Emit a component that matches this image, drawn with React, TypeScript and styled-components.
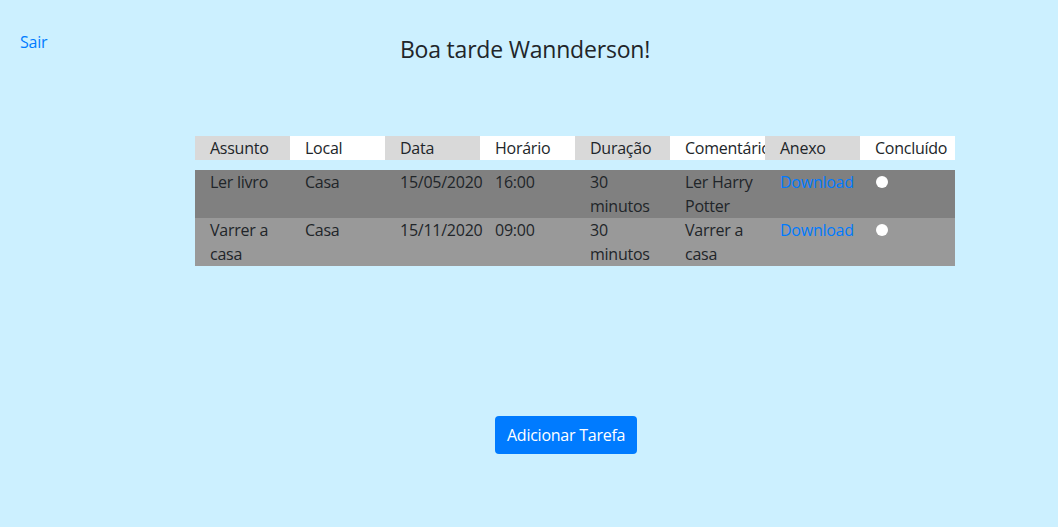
import styled, { createGlobalStyle } from "styled-components"

const GlobalStyle = createGlobalStyle`
  html, body {
    margin: 0;
    padding: 0;
    background: #ccf0ff;
    font-family: "Open Sans", "Noto Sans", sans-serif;
    color: #212529;
    letter-spacing: -0.25px;
  }
`

const tasks = [
  { assunto: "Ler livro", local: "Casa", data: "15/05/2020", horario: "16:00", duracao: "30 minutos", comentario: "Ler Harry Potter" },
  { assunto: "Varrer a casa", local: "Casa", data: "15/11/2020", horario: "09:00", duracao: "30 minutos", comentario: "Varrer a casa" },
]

const headers = ["Assunto", "Local", "Data", "Horário", "Duração", "Comentário", "Anexo", "Concluído"]

const App: React.FC = () => {
  return (
    <Page>
      <GlobalStyle />
      <Top>
        <Link href="#">Sair</Link>
        <Title>Boa tarde Wannderson!</Title>
      </Top>
      <Table>
        <HeadRow>
          {headers.map((h, i) => (
            <HeadCell key={h} $shaded={i % 2 === 0}>{h}</HeadCell>
          ))}
        </HeadRow>
        {tasks.map((t, i) => (
          <Row key={t.assunto} $dark={i % 2 === 0}>
            <Cell>{t.assunto}</Cell>
            <Cell>{t.local}</Cell>
            <Cell>{t.data}</Cell>
            <Cell>{t.horario}</Cell>
            <Cell>{t.duracao}</Cell>
            <Cell>{t.comentario}</Cell>
            <Cell><Link href="#">Download</Link></Cell>
            <Cell><Radio type="radio" name={"done" + i} /></Cell>
          </Row>
        ))}
      </Table>
      <Footer>
        <Button>Adicionar Tarefa</Button>
      </Footer>
    </Page>
  )
}

export default App

const Page = styled.div`
  width: 1058px;
  height: 527px;
  display: flex;
  flex-direction: column;
`
const Top = styled.div`
  position: relative;
  height: 136px;
  display: flex;
  justify-content: center;
`
const Link = styled.a`
  color: #007bff;
  text-decoration: none;
  font-size: 16px;
  line-height: 24px;
  ${Top} > & {
    position: absolute;
    left: 20px;
    top: 30px;
  }
`
const Title = styled.h1`
  margin: 34px 0 0 -8px;
  font-size: 23px;
  letter-spacing: -0.2px;
  line-height: 30px;
  font-weight: 400;
  height: 30px;
`
const Table = styled.div`
  margin-left: 195px;
  width: 760px;
  font-size: 16px;
  line-height: 24px;
`
const HeadRow = styled.div`
  display: grid;
  grid-template-columns: repeat(8, 95px);
  margin-bottom: 10px;
`
const HeadCell = styled.div<{ $shaded: boolean }>`
  padding-left: 15px;
  height: 24px;
  overflow: hidden;
  white-space: nowrap;
  background: ${(p) => (p.$shaded ? "#d9d9d9" : "#ffffff")};
`
const Row = styled.div<{ $dark: boolean }>`
  display: grid;
  grid-template-columns: repeat(8, 95px);
  height: 48px;
  background: ${(p) => (p.$dark ? "#808080" : "#999999")};
`
const Cell = styled.div`
  padding-left: 15px;
  white-space: normal;
`
const Radio = styled.input`
  appearance: none;
  margin: 6px 0 0 1px;
  width: 12px;
  height: 12px;
  border-radius: 50%;
  background: #ffffff;
  border: none;
  vertical-align: top;
`
const Footer = styled.div`
  display: flex;
  padding: 150px 0 0 495px;
`
const Button = styled.button`
  background: #007bff;
  color: #ffffff;
  border: none;
  border-radius: 4px;
  padding: 6px 12px;
  height: 38px;
  font-family: inherit;
  font-size: 16px;
  letter-spacing: -0.25px;
  line-height: 24px;
`
